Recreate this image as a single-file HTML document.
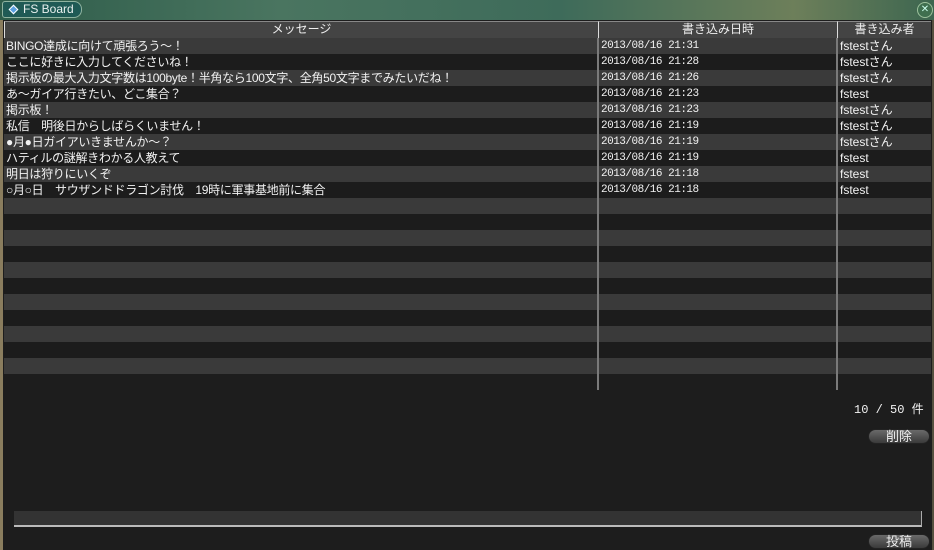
<!DOCTYPE html>
<html><head><meta charset="utf-8"><style>
*{margin:0;padding:0;box-sizing:border-box}
body{width:934px;height:550px;background:#1d1d1d;position:relative;overflow:hidden;font-family:"Liberation Sans","Noto Sans CJK JP",sans-serif;color:#f2f2f2;font-size:12px}
.top{position:absolute;left:0;top:0;width:934px;height:20px;background:linear-gradient(90deg,#2e5c4a,#4a7560 30%,#3e6b5a 60%,#6d7f5a 85%,#3d6650);}
.tab{position:absolute;left:2px;top:1px;width:80px;height:17px;background:#1f5a55;border:1px solid #8fb3a0;border-radius:3px 8px 8px 3px;color:#e8f0ee;font-size:12px;line-height:15px;padding-left:20px}
.dia{position:absolute;left:7px;top:4px;width:7px;height:7px;background:#5aa0e0;border:1px solid #fff;transform:rotate(45deg)}
.close{position:absolute;right:1px;top:2px;width:16px;height:16px;border-radius:50%;background:#3f6f4f;border:1px solid #9cc09c;color:#cfe;font-size:10px;text-align:center;line-height:14px}
.lb{position:absolute;left:0;top:20px;width:3px;height:530px;background:#8a7d5e}
.rb{position:absolute;right:0;top:20px;width:2px;height:530px;background:#55503f}
.hdr{position:absolute;top:21px;height:17px;background:#444;border-left:1px solid #ddd;border-top:1px solid #888;text-align:center;line-height:15px;color:#eee}
.row{position:absolute;left:4px;width:927px;height:16px;line-height:16px;white-space:nowrap}
.row span{position:absolute;top:0}
.c1{left:2px;letter-spacing:-0.3px}.c2{left:597px;font-family:"Liberation Mono","Noto Sans CJK JP",monospace;font-size:11px;letter-spacing:-0.5px}.c3{left:836px}
.vl{position:absolute;top:38px;width:2px;height:352px;background:#7a7a7a}
.btn{position:absolute;width:62px;height:15px;border-radius:8px;background:linear-gradient(#6a6a6a,#3a3a3a);border:1px solid #222;text-align:center;line-height:13px;font-size:13px;color:#eee}
</style></head><body>
<div class="top"><div class="tab"><div class="dia"></div>FS Board</div><div class="close">✕</div></div>
<div class="lb"></div><div class="rb"></div>
<div class="hdr" style="left:4px;width:594px">メッセージ</div>
<div class="hdr" style="left:598px;width:239px">書き込み日時</div>
<div class="hdr" style="left:837px;width:94px">書き込み者</div>
<div class="row" style="top:38px;background:#3a3a3a"><span class="c1">BINGO達成に向けて頑張ろう～！</span><span class="c2">2013/08/16 21:31</span><span class="c3">fstestさん</span></div>
<div class="row" style="top:54px;background:#1c1c1c"><span class="c1">ここに好きに入力してくださいね！</span><span class="c2">2013/08/16 21:28</span><span class="c3">fstestさん</span></div>
<div class="row" style="top:70px;background:#3a3a3a"><span class="c1">掲示板の最大入力文字数は100byte！半角なら100文字、全角50文字までみたいだね！</span><span class="c2">2013/08/16 21:26</span><span class="c3">fstestさん</span></div>
<div class="row" style="top:86px;background:#1c1c1c"><span class="c1">あ～ガイア行きたい、どこ集合？</span><span class="c2">2013/08/16 21:23</span><span class="c3">fstest</span></div>
<div class="row" style="top:102px;background:#3a3a3a"><span class="c1">掲示板！</span><span class="c2">2013/08/16 21:23</span><span class="c3">fstestさん</span></div>
<div class="row" style="top:118px;background:#1c1c1c"><span class="c1">私信　明後日からしばらくいません！</span><span class="c2">2013/08/16 21:19</span><span class="c3">fstestさん</span></div>
<div class="row" style="top:134px;background:#3a3a3a"><span class="c1">●月●日ガイアいきませんか～？</span><span class="c2">2013/08/16 21:19</span><span class="c3">fstestさん</span></div>
<div class="row" style="top:150px;background:#1c1c1c"><span class="c1">ハティルの謎解きわかる人教えて</span><span class="c2">2013/08/16 21:19</span><span class="c3">fstest</span></div>
<div class="row" style="top:166px;background:#3a3a3a"><span class="c1">明日は狩りにいくぞ</span><span class="c2">2013/08/16 21:18</span><span class="c3">fstest</span></div>
<div class="row" style="top:182px;background:#1c1c1c"><span class="c1">○月○日　サウザンドドラゴン討伐　19時に軍事基地前に集合</span><span class="c2">2013/08/16 21:18</span><span class="c3">fstest</span></div>
<div class="row" style="top:198px;background:#3a3a3a"></div><div class="row" style="top:214px;background:#1c1c1c"></div>
<div class="row" style="top:230px;background:#3a3a3a"></div><div class="row" style="top:246px;background:#1c1c1c"></div>
<div class="row" style="top:262px;background:#3a3a3a"></div><div class="row" style="top:278px;background:#1c1c1c"></div>
<div class="row" style="top:294px;background:#3a3a3a"></div><div class="row" style="top:310px;background:#1c1c1c"></div>
<div class="row" style="top:326px;background:#3a3a3a"></div><div class="row" style="top:342px;background:#1c1c1c"></div>
<div class="row" style="top:358px;background:#3a3a3a"></div>
<div class="vl" style="left:597px"></div><div class="vl" style="left:836px"></div>
<div style="position:absolute;left:854px;top:400px;font-size:12px;font-family:'Liberation Mono','Noto Sans CJK JP',monospace">10 / 50 件</div>
<div class="btn" style="left:868px;top:429px">削除</div>
<div style="position:absolute;left:14px;top:511px;width:908px;height:16px;background:#333;border-bottom:2px solid #bbb;border-right:1px solid #aaa"></div>
<div class="btn" style="left:868px;top:534px">投稿</div>
</body></html>
